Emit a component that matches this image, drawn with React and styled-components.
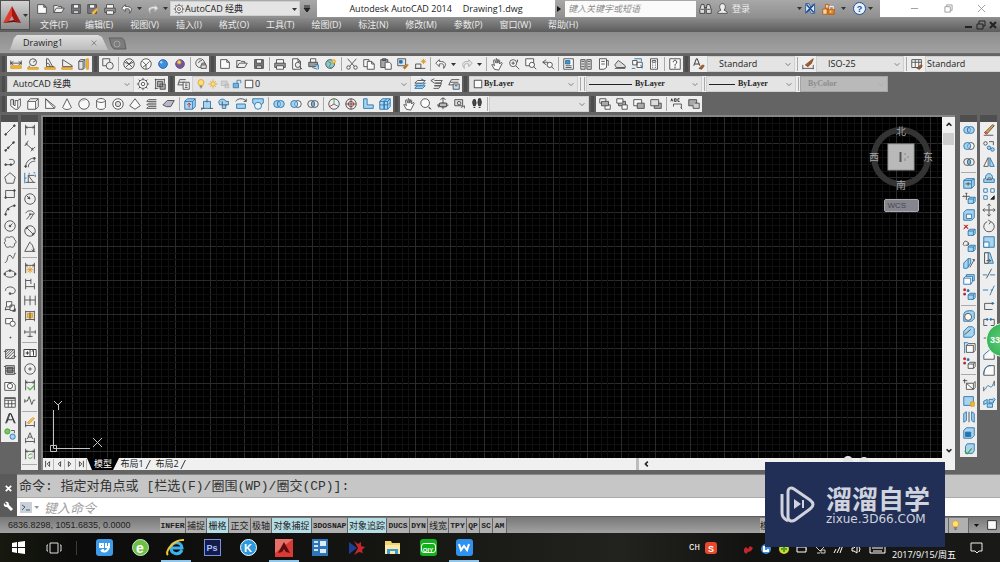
import styled, { createGlobalStyle, css } from "styled-components";

const K = "#4a4a4a";
const B = "#2573ad";
const L = "#a8d4f0";
const O = "#dc9a24";
const R = "#c4262e";
const G = "#3fa535";
const W = "#fafafa";

const circle = (x, y, r) =>
  `M${x - r} ${y}a${r} ${r} 0 1 0 ${2 * r} 0a${r} ${r} 0 1 0 ${-2 * r} 0z`;

const dimLine = "M3 2v12M13 2v12M3 5h10M5 4l-2 1 2 1M11 4l2 1-2 1";
const cube = "M7 8h6v5H7zM7 8l2-2h6l-2 2M15 6v5l-2 2";
const hand = "M5 14l-3-5 1-1 2 2-1-6 1-1 2 4V2h1l1 5 1-4 1 1v4l2-2 1 1-3 6-1 2z";

// every icon is a list of [path, stroke, fill] on a 16 x 16 grid
const icons = {
  distance: [["M2 10h12v3H2z", O, "#f0b83c"], ["M2 4v5M14 4v5M2 7h12M5 5L2 7l3 2M11 5l3 2-3 2"]],
  radius: [[circle(8, 6, 4)], ["M8 6l3-2M4 10l-1 2"], ["M2 12h12v2H2z", O, "#f0b83c"]],
  angle: [["M4 2v9h9M4 2h2l5 9M4 7c3 0 4 2 4 4"], ["M2 12h12v2H2z", O, "#f0b83c"]],
  area: [["M3 3v8h11v-1L3 3z"], ["M2 12h12v2H2z", O, "#f0b83c"]],
  volume: [["M2 5l2-2h5v9l-2 2H2zM7 5l2-2M2 5h5v9", K, "#e3e3e3"], ["M11 2h2v12h-2z", O, "#f0b83c"]],
  region: [["M2 2h8v8H2z"], [circle(10, 10, 4), K, "#eee"]],
  wire: [[circle(8, 8, 6)], ["M4 4l4 4 4-4M8 8l-4 4M8 8l4 4M3 6l5 2 5-2"]],
  hidden: [[circle(8, 8, 6), K, W], ["M4 5l4 4 4-4M8 9v5M4 12l4-3"]],
  blueBall: [[circle(8, 8, 5), "#1b5fa8", "#3f8fdc"], [circle(6, 6, 1), "#a9d2f5", "#d5ebff"]],
  shadedBall: [[circle(8, 8, 5), "#5a4a8a", "#6a5aa5"], [circle(7, 6, 2), "#f0a030", "#f7c85a"], ["M4 10c3 3 6 2 8-1", "#b04a4a"]],
  lockView: [[circle(7, 7, 5)], ["M5 7a4 4 0 014-3"], ["M8 9h6v4H8zM9 9V7h4v2", K, "#ddd"]],
  newFile: [["M3 3h7l3 3v7H3zM10 3v3h3", K, W]],
  open: [["M2 12V4h4l1 1h4v2M2 12l3-5h9l-3 5z", K, "#eee"]],
  save: [["M3 3h10v10H3z", K, "#75797f"], ["M5 3h6v4H5z", K, W], ["M5 10h6v3H5z", K, "#ddd"]],
  saveAs: [["M2 3h10v10H2z", K, "#75797f"], ["M4 3h6v4H4z", K, W], ["M14 8l-5 6H7v-2l5-5z", O, "#f6c25a"]],
  print: [["M2 7h12v5H2z", K, "#9b9b9b"], ["M4 7V3h8v4zM4 10h8v4H4z", K, W]],
  preview: [["M3 2h6l3 3v9H3zM9 2v3h3", K, W], [circle(9, 9, 3), K, "#e4eef5"], ["M11 11l3 3"]],
  publish: [["M2 6h10v5H2z", K, "#9b9b9b"], ["M4 6V2h6v4z", K, W], ["M9 9h4v5M6 12l6 2", B, L]],
  globe: [[circle(7, 8, 5), K, "#8fc4e0"], ["M4 5l4 2-2 4 3 2M9 4l3 4", G], [circle(11, 5, 2), O, "#f5d060"]],
  cut: [["M3 2l8 9M13 2L5 11"], [circle(4, 12, 2)], [circle(12, 12, 2)]],
  copy: [["M2 3h6v8H2z", K, W], ["M6 5h5l3 3v6H6zM11 5v3h3", K, W]],
  paste: [["M2 3h8v9H2z", K, "#a8a8a8"], ["M4 2h4v2H4z", K, "#777"], ["M7 6h5l2 2v6H7z", K, W]],
  matchProps: [["M2 2h9v8H2z", K, "#d5e6f2"], ["M4 4h3v3H4z", B, B], ["M8 12l5-4 1 1-4 5z", O, "#a06030"]],
  blockEdit: [["M3 8h6v5H3zM2 13h12"], ["M12 2v6M9 5h6M10 3l4 4M14 3l-4 4", O]],
  undo: [["M6 3L2 7l4 4V8c4-1 6 0 5 5 4-5 2-8-5-8z", K, W]],
  redo: [["M10 3l4 4-4 4V8c-4-1-6 0-5 5-4-5-2-8 5-8z", "#aaa", "#e4e4e4"]],
  pan: [[hand, K, W]],
  zoomRt: [[circle(7, 7, 4), K, W], ["M10 10l4 4M7 5v4M5 7h4M12 3v3"]],
  zoomWin: [["M2 2h9v8H2z", K, W], [circle(9, 9, 3), K, W], ["M11 11l3 3"]],
  zoomPrev: [["M6 3L2 6l4 3M2 6h6"], [circle(10, 9, 3), K, W], ["M12 11l3 3"]],
  zoomTool: [[circle(7, 7, 5), K, W], ["M11 11l3 3M11 12l2 2"]],
  properties: [["M2 2h11v12H2z", K, W], ["M4 4h5v4H4z", B, "#4b8fc5"], ["M4 10h7M4 12h7"]],
  designCenter: [["M2 3h5v11H2zM9 3h5v11H9zM3 5h3M3 8h3M3 11h3M10 5h3M10 8h3M10 11h3", K, "#ddd"]],
  palettes: [["M4 2h8v10l-3 2H4zM6 5h4M6 8h4M12 4h2v6", K, W]],
  sheetSet: [["M2 9l4-5 3 2 5 4v2H4zM2 13h12", K, "#ddd"]],
  markup: [["M3 4h5v5H3zM8 6h6v6H8z", K, W], ["M2 13h4M5 2h8v3M12 9l2 4", B]],
  calc: [["M4 2h8v12H4zM6 4h4v2H6z", K, W], ["M6 8h1M9 8h1M6 10h1M9 10h1M6 12h1M9 12h1"]],
  help: [["M2 2h12v12H2z", K, W], ["M6 6c0-3 4-3 4 0 0 2-2 1-2 4M8 11v2", "#222"]],
  textStyle: [["M2 10L5 2h1l3 8M3 8h5", "#222"], ["M8 13l4-4 2 1-3 4z", "#8a4a28", "#a05a30"]],
  dimStyle: [["M2 13h12M2 9v5M14 9v5", K], ["M5 9l5-4 4-3-2 5-4 4z", "#8a4a28", "#a05a30"]],
  tableStyle: [["M2 3h11v9H2zM2 6h11M6 3v9M10 3v9", K, W], ["M8 13l4-4 2 1-3 4z", "#8a4a28", "#a05a30"]],
  gear: [["M8 1v2M8 13v2M1 8h2M13 8h2M3 3l2 2M11 11l2 2M13 3l-2 2M5 11l-2 2"], [circle(8, 8, 5), K, W], [circle(8, 8, 2)]],
  workspace: [["M2 3h11M2 13h4M3 2v12M13 2v5"], ["M5 5h6v6H5zM8 8h6v6H8z", K, "#a9a9a9"]],
  layerProps: [["M3 3h7M2 6h7M1 9h6M3 3L1 9"], ["M7 6h7v8H7zM9 8h3M9 10h3M9 12h3", K, W]],
  bulb: [[circle(8, 6, 4), O, "#fbe07a"], ["M6 11h4M7 13h2"]],
  sun: [[circle(8, 8, 3), O, "#fbe07a"], ["M8 2v2M8 12v2M2 8h2M12 8h2M4 4l1 1M11 11l1 1M12 4l-1 1M5 11l-1 1", O]],
  freeze: [["M3 4h8v6H3zM8 8h5v5H8z", "#b5b5b5", "#d2d2d2"]],
  unlock: [["M3 7h7v6H3z", B, "#6fb5e2"], ["M8 7V3h5v4", B]],
  swatch: [["M3 3h10v10H3z", "#222", W]],
  layers: [["M5 10h9l-3 3H2z", B, L], ["M5 7h9l-3 3H2z", B, L], ["M5 4h9l-3 3H2z", K, W], ["M9 2l4 2", B]],
  layerPrev: [["M5 4h9l-2 3H5M6 7h7l-1 3H5M5 10h7l-2 3H4"], ["M5 2L1 4l4 3"]],
  layerIso: [["M5 3h9M4 6h9M2 9h6M5 3L2 9"], ["M7 8h7v6H7zM9 10h3", K, "#c8dff0"]],
  polysolid: [["M2 3h3v6l2 1V4h3l3-2v8l-3 4H7l-5-4z", K, W], ["M5 3v6M10 4v9"]],
  box: [["M2 5l3-3h9v9l-3 3H2zM2 5h9v9M11 5l3-3", K, W]],
  wedge: [["M3 2v11h10zM3 2l11 9-1 2", K, W]],
  cone: [["M8 2L3 12c2 3 8 3 10 0z", K, W]],
  sphere: [[circle(8, 8, 6), K, W], ["M3 6c2-2 4-2 6-2", "#bbb"]],
  cylinder: [["M3 4v8c2 3 8 3 10 0V4c-2-3-8-3-10 0zM3 4c2 3 8 3 10 0", K, W]],
  torus: [[circle(8, 8, 6), K, W], [circle(8, 8, 3), K, "#ddd"]],
  pyramid: [["M8 2L2 10l6 4 6-4z", K, W]],
  helix: [["M4 3h9M2 5h11M4 7h9M2 9h11M4 11h9M2 13h11M4 3l-2 2M4 7L2 9M4 11l-2 2"]],
  planar: [["M1 9l5-5h8l-4 7H5z", K, "#b9b5cc"]],
  extrude: [["M2 5l3-3h9v9l-3 3H2zM2 5h9v9M11 5l3-3", B, L], ["M7 12V7M5 9l2-2 2 2", R]],
  presspull: [["M4 5h8v8H4z", B, L], ["M8 2v4M2 13h3M11 13h4M2 12v3"]],
  sweep: [["M2 6c0-4 7-5 8-1h3v4h-3v4H6V9H3z", B, L], ["M6 5v4h5"]],
  revolve: [["M3 8h10v5H3z", B, L], ["M2 5c2-4 10-4 12 0M14 2v3h-3"]],
  loft: [["M2 2h12v5l-4 3H6L2 7z", B, L], [circle(8, 10, 4), B, "#e5f3fb"]],
  union: [[circle(6, 8, 4), B, L], [circle(10, 8, 4), B, L], ["M8 5a4 4 0 010 6 4 4 0 010-6z", B, W]],
  subtract: [[circle(10, 8, 4), K, W], [circle(6, 8, 4), B, L], ["M8 5a4 4 0 000 6", B, W]],
  intersect: [[circle(6, 8, 4)], [circle(10, 8, 4)], ["M8 5a4 4 0 010 6 4 4 0 010-6z", B, L]],
  gizmo: [[circle(8, 8, 6)], ["M8 8V2", G], ["M8 8l-5 3", R], ["M8 8l5 3", B]],
  orbitGlobe: [[circle(8, 8, 6), K, "#e8e8e8"], [circle(8, 8, 3), R], ["M8 2v12M2 8h12"]],
  ucs: [["M3 2v11h11V9H7V2z", B, L]],
  views: [["M2 5l3-3h9v9l-3 3H2zM2 5h9v9M11 5l3-3M2 9h9l3-3M7 5v9l0-9 3-3", B, L]],
  orbit: [["M8 1v13M5 3l3-2 3 2M2 9c2-3 10-3 12 0M2 9l1 3M14 9c-2 3-8 4-12 0"], ["M4 7h8v4H4z", K, "#bbb"]],
  swivel: [["M2 3h9v7H2z", K, "#ddd"], [circle(7, 7, 2)], ["M9 12l4-2v3"]],
  walk: [["M4 3h2l1 4-1 3H4L3 6zM4 12h2M10 2h2l1 4-1 4h-2L9 6zM10 12h2", "#222", K]],
  front: [["M2 2h7v5H2zM8 9h6v5H8z", K, W], ["M4 5h8v5H4z", K, "#a9a9a9"]],
  back: [["M4 5h8v5H4z", K, "#a9a9a9"], ["M2 2h7v5H2zM8 9h6v5H8z", K, W]],
  above: [["M2 3h9v7H2z", K, W], ["M6 7h8v6H6z", K, "#a9a9a9"]],
  under: [["M6 7h8v6H6z", K, "#a9a9a9"], ["M2 3h9v7H2z", K, "#ddd"]],
  textFront: [["M1 5l1-3 1 3M5 2v3h2V2zM11 2H9v3h2", "#222"], ["M4 8h9v5M4 8v3M12 12l2 2", K]],
  hatchBack: [["M2 3h9v7H2z", K, "#a9a9a9"], ["M9 7h5v6H7v-3", K, "#ccc"]],
  line: [["M3 13L13 3"], [circle(3, 13, 1), K, K], [circle(13, 3, 1), K, K]],
  xline: [["M3 13L13 3"], [circle(6, 10, 1), K, K], [circle(12, 4, 1), K, K], [circle(3, 13, 1), K, K]],
  pline: [["M3 11h7c4 0 4-6 0-6H7"], [circle(3, 11, 1), K, K], [circle(9, 11, 1), K, K]],
  polygon: [["M8 2l6 5-2 7H4L2 7z"]],
  rect: [["M3 4h10v8H3z"], [circle(3, 12, 1), K, K], [circle(13, 4, 1), K, K]],
  arc: [["M3 13c0-5 4-9 10-10"], [circle(3, 13, 1), K, K], [circle(6, 7, 1), K, K], [circle(13, 3, 1), K, K]],
  circle: [[circle(8, 8, 6)], [circle(8, 8, 1), K, K], ["M8 8l3-3"]],
  cloud: [["M3 7C1 4 4 1 7 3c2-2 6-1 6 2 3 2 2 5 0 5 1 4-3 5-5 3-2 2-6 1-5-2-2-1-2-3 0-4z"]],
  spline: [["M2 13C6 14 4 4 8 5s2 9 6-3"]],
  ellipse: [["M2 8c0-5 12-5 12 0S2 13 2 8z"], [circle(2, 8, 1), K, K], [circle(8, 4, 1), K, K], [circle(14, 8, 1), K, K]],
  ellArc: [["M3 9c-1-6 11-6 11 0 0 3-4 4-6 3"], [circle(8, 12, 1), K, K]],
  insert: [["M4 3h6v6H4zM8 7h5v6H8zM2 12h6M3 9v4", K, W], ["M11 14h3v-3z", K, K]],
  makeBlock: [["M3 4h8v6H3z", K, W], [circle(11, 10, 3), K, W]],
  point: [["M8 7h1v1H8z", K, K]],
  hatch: [["M3 3h10v10H3zM3 6l3-3M3 9l6-6M3 12l9-9M5 13l8-8M9 13l4-4M1 5h2M13 11h2"]],
  gradient: [["M3 3h10v10H3z", K, "#c5c5c5"], ["M3 6h10M3 9h10M1 4h2M13 12h2M5 5h6v6H5z", K, "#8f8f8f"]],
  regionDraw: [["M2 4h9l3 3v6H2z", K, W], [circle(8, 8, 3)]],
  table: [["M2 3h12v11H2zM2 6h12M2 10h12M6 6v8M10 6v8", K, W], ["M2 4h12", K]],
  mtext: [["M3 14L7 3h2l4 11M5 10h6M4 14L8 3M14 14L9 3", "#222"]],
  addSel: [[circle(5, 5, 3), G, "#7cc55f"], [circle(11, 11, 3), B, L], ["M9 4h4v3"]],
  dimLinear: [[dimLine]],
  dimAligned: [["M3 5l9 8M2 8l4-6M9 14l5-5M5 5l-1 2M10 13l1-3"]],
  dimArc: [["M3 14c0-6 4-10 11-11M6 14c0-4 3-7 8-7"], [circle(3, 13, 1), K, K], [circle(13, 4, 1), K, K]],
  dimOrd: [["M6 13V5h7M6 5l6 8M3 13h11"], ["M2 2v12M7 2v2M2 8h2M12 2h2M14 4v3", B]],
  dimRad: [[circle(8, 8, 6)], ["M8 8L4 4M8 8l-3-1M8 8L7 5"]],
  dimJog: [["M3 6c2-4 9-4 10 1M4 13l5-6-2 0 5 0-4 6"]],
  dimDia: [[circle(8, 8, 6)], ["M4 4l8 8M4 6V4h2M12 10v2h-2"]],
  dimAng: [["M2 13L8 2M2 13h12M8 3c3 2 4 5 4 9M10 11l2 2 1-3"]],
  quickDim: [[dimLine], ["M8 6v8M4 10h8M5 7l6 6M11 7l-6 6", O]],
  baseline: [["M3 2v12M9 2v6M13 7v7M3 4h6M3 11h10"]],
  cont: [["M2 3v11M8 3v11M14 3v11M2 8h12"]],
  dimSpace: [["M3 2v12M13 2v12M3 3h10M3 12h10"], ["M5 5h6v5H5z", O, "#f0b83c"], ["M8 4v8"]],
  dimBreak: [["M2 8h5M9 8h5M8 2v12M5 13h6M2 6v4M14 6v4"]],
  tolerance: [["M1 4h14v8H1zM8 4v8", "#222", W], ["M3 8h4M5 6v4M10 6l2-1v6", "#222"]],
  centerMark: [[circle(8, 8, 6)], ["M8 6v4M6 8h4"]],
  inspect: [[dimLine], ["M5 10l3 3 5-5M5 11l3 3 5-5", G]],
  jogLine: [["M2 8h3l2-5 3 9 2-5h2M2 6v4"]],
  dimEdit: [["M3 7v7M13 7v7M3 12h10"], ["M5 9l6-6 2 1-6 6z", O, "#f6c25a"]],
  dimTedit: [["M3 8v6M13 8v6M3 12h10M5 9l3-7 3 7M6 7h4"]],
  dimUpdate: [[dimLine], ["M6 10a3 3 0 015-1M11 11a3 3 0 01-5 1", G]],
  face: [["M2 5l3-2h9v8l-3 3H2zM2 5h9v9M11 5l3-2", B, L], ["M4 9h6M7 7v4"]],
  moveFace: [["M5 1v8M1 5h8M4 2l1-1 1 1M2 4L1 5l1 1"], [cube, B, L]],
  offsetFace: [["M2 5l3-3h9v9l-3 3H2z", B, L], ["M5 7h6v5H5z", B, W]],
  deleteFace: [["M2 1l5 5M7 1L2 6M3 1l4 4M6 1L2 5", R], [cube, B, L]],
  rotFace: [["M3 7a3 3 0 114-1M7 3v3H4"], [cube, B, L]],
  taperFace: [["M2 13V8l5-5h3v5l-4 6H2zM7 3v10", B, L], ["M9 13l5-9M12 4h2v2"]],
  copyFace: [["M5 3h9v7H5z", B, L], ["M2 7l2-2h8v6l-2 3H2zM2 7h8v7", B, W]],
  colorFace: [["M2 1h2v2H2z", R, R], ["M6 2h2v2H6z", B, B], ["M2 6h2v2H2z", R, K], [cube, B, L]],
  fillet3d: [["M2 7c0-3 2-5 6-5h4l2 2v7l-3 3H2z", B, L], [circle(7, 9, 4), K, W]],
  chamfer3d: [["M2 7l5-5h5l2 2v7l-3 3H2z", B, L], ["M3 11l7-6"]],
  copyEdge: [["M5 5h8v8H5zM5 5l2-2h8v8l-2 2", K, W], ["M3 2v12M2 2h5", B]],
  colorEdge: [["M2 1h2v2H2z", R, R], ["M6 2h2v2H6z", B, B], ["M2 6h2v2H2z", R, K], [cube, K, W]],
  imprint: [["M5 6h8v7H5zM5 6l8 7M13 6l2-2v7l-2 2", K, W], ["M3 1v5M1 3h5"]],
  clean: [["M2 3h11v8l-3 2H2z", B, L], ["M10 9h4v5h-4z", O, "#f0b83c"]],
  separate: [["M2 4l3-2v10l-3 2zM14 4l-3-2v10l3 2z", B, L], ["M8 2v12"]],
  shell: [["M2 5l3-3h9v9l-3 3H2z", B, L], ["M4 7h6v5H4z", B, B]],
  check: [["M4 5l2-3h8v8l-2 3H4z", B, L], ["M3 10l3 3 5-6M3 11l3 3 5-6", G]],
  erase: [["M3 11L12 2l2 1-8 9z", K, "#e8a33c"], ["M2 14h11"], ["M3 11l2 2 1-1-2-2z", R, "#e58a8a"]],
  copyObj: [[circle(4, 5, 2)], [circle(8, 10, 2), B, L], [circle(12, 12, 2), B, L], ["M8 3h5v4"]],
  mirror: [["M7 3v10H2z", K, W], ["M9 3v10h5z", B, L]],
  offset: [["M2 13h12V9h-2c1-8-9-8-8 0H2z", B, L], ["M5 10h6c0-3-5-3-5 0"]],
  array: [["M2 2h4v4H2zM10 2h4v4h-4zM2 10h4v4H2z", B, W], ["M10 14h4v-4z", "#222", "#222"]],
  move: [["M8 1v14M1 8h14M6 3l2-2 2 2M6 13l2 2 2-2M3 6L1 8l2 2M13 6l2 2-2 2"]],
  rotate: [["M10 3a6 6 0 11-4 0M7 1l3 2-2 3"]],
  scale: [["M2 2h12v12H2z", B, L], ["M2 8h6v6H2z", B, W]],
  stretch: [["M3 2h6l4 12H3z", B, L], ["M3 2h4v12H3z", K, W], ["M5 11h5M8 9l2 2-2 2"]],
  trim: [["M1 9h5M9 9h6", B], ["M5 13l6-11"]],
  extend: [["M1 8h6", B], ["M10 8h2"], ["M9 14l5-11", B]],
  breakAt: [["M14 5H3v7h9"], [circle(12, 5, 1), B, B]],
  break: [["M2 12V5h4M10 5h4v7h-4M2 12h4"], [circle(6, 5, 1), B, B], [circle(10, 5, 1), B, B]],
  join: [["M2 8h5M9 8h5M8 5v6"]],
  chamfer: [["M2 14h12V8L9 3", K, W], ["M2 14V9l7-6", B]],
  fillet: [["M2 14h12V3H9C5 3 2 7 2 14z", K, W], ["M2 13c0-6 3-10 8-10", B]],
  blend: [["M2 12c3 1 3-6 6-4s3 2 6-5", B], ["M2 14V9M14 2v6"]],
  explode: [["M2 7l4-2v4l-4 2zM8 5h5v4H8zM6 10h6v4H6z", B, L], ["M13 3l2 2-2 3", B, L]],
};

const GlobalStyle = createGlobalStyle`
  * {
    box-sizing: border-box;
  }
  body {
    margin: 0;
    background: #646464;
    color: #222;
    font-family: "Open Sans", "Noto Sans CJK SC", sans-serif;
    font-size: 9px;
    line-height: 12px;
  }
  button, input, select {
    margin: 0;
    padding: 0;
    border: 0;
    border-radius: 0;
    background: none;
    color: inherit;
    font: inherit;
  }
  a {
    color: inherit;
    text-decoration: none;
  }
`;

const Page = styled.div`
  position: relative;
  display: flex;
  flex-direction: column;
  min-height: 100vh;
  overflow: hidden;
`;

const Svg = styled.svg`
  display: block;
  flex: none;
  overflow: visible;
`;

const Header = styled.header`
  display: grid;
  grid-template-columns: 30px 1fr;
  grid-template-rows: 17px 15px;
  background: linear-gradient(#989898 17px, #8a8a8a 18px, #5c5c5c);
`;

const AppButton = styled.button`
  grid-row: span 2;
  display: flex;
  align-items: center;
  margin-bottom: 2px;
  border: 1px solid #4f4f4f;
  background: linear-gradient(#d2d2d2, #8c8c8c);
`;

const TitleBar = styled.div`
  display: flex;
  background: #fff;
`;

const QuickAccess = styled.div`
  display: flex;
  align-items: center;
  width: 287px;
  padding-left: 3px;
  background: linear-gradient(#a8a8a8, #909090);
`;

const Title = styled.h1`
  flex: 1;
  display: flex;
  justify-content: center;
  gap: 11px;
  margin: 0;
  font-size: 9px;
  font-weight: 400;
  line-height: 17px;
  white-space: nowrap;
`;

const InfoCenter = styled.div`
  display: flex;
  align-items: center;
  width: 325px;
  background: linear-gradient(#a8a8a8, #909090);
`;

const SearchInput = styled.input`
  width: 131px;
  height: 16px;
  margin-left: 2px;
  margin-right: 1px;
  padding-left: 3px;
  background: #fafafa;

  &::placeholder {
    color: #8c8c8c;
    font-style: italic;
    opacity: 1;
  }
`;

const SignIn = styled.a`
  width: 65px;
  margin-left: 1px;
  color: #eee;
`;

const WindowButtons = styled.div`
  display: flex;
  align-items: center;
  justify-content: space-between;
  width: 120px;
  padding: 0 14px 0 30px;
  color: #999;
`;

const MenuBar = styled.nav`
  display: flex;
  align-items: center;
  gap: 17px;
  padding-left: 10px;
  color: #ececec;
  white-space: nowrap;
`;

const DocButtons = styled.div`
  display: flex;
  gap: 2px;
  margin-left: auto;
  padding-right: 2px;
  color: #222;
`;

const FileTabs = styled.div`
  display: flex;
  align-items: flex-end;
  height: 22px;
  padding: 0 10px 3px;
  background: linear-gradient(#8d8d8d, #a2a2a2);
  border-bottom: 1px solid #6b6b6b;
`;

const FileTab = styled.div`
  display: flex;
  align-items: center;
  justify-content: space-between;
  width: 98px;
  height: 15px;
  padding: 0 10px 0 13px;
  background: linear-gradient(#dedede, #bcbcbc);
  clip-path: polygon(7px 0, 88px 0, 92px 2px, 100% 100%, 0 100%, 4px 3px);
  color: #222;
`;

const ToolbarArea = styled.div`
  display: flex;
  flex-direction: column;
  gap: 4px;
  padding: 2px 0 3px;
`;

const ToolbarRow = styled.div`
  display: flex;
  height: 16px;
  overflow: hidden;
`;

const Grip = styled.div`
  flex: none;
  width: 7px;
  background: #4c4c4c;
  border-left: 2px solid #5c5c5c;
  border-right: 2px solid #5c5c5c;
`;

const Bar = styled.div`
  flex: ${(props) => (props.$grow ? "1" : "none")};
  display: flex;
  align-items: center;
  background: #eee;
`;

const SideBar = styled.aside`
  display: flex;
  align-items: flex-start;
  gap: 3px;
`;

const ToolColumn = styled.div`
  width: 17px;
  border-top: 7px solid #4f4f4f;
  background: #eee;
  padding-bottom: ${(props) => (props.$tall ? "3px" : "0")};
`;

const ToolButton = styled.button`
  flex: none;
  display: grid;
  place-items: center;
  width: 17px;
  height: 16px;
`;

const ArrowButton = styled(ToolButton)`
  width: ${(props) => props.$width || 9}px;
`;

const Separator = styled.span`
  flex: none;
  display: block;
  ${(props) =>
    props.$flat
      ? css`
          height: 5px;
          background: linear-gradient(#aaa, #aaa) center / 15px 1px no-repeat;
        `
      : css`
          width: 4px;
          height: 14px;
          background: linear-gradient(#aaa, #aaa) center / 1px 14px no-repeat;
        `}
`;

const TaskSeparator = styled(Separator)`
  align-self: center;
  margin: 0 8px 0 2px;
  opacity: 0.3;
`;

const Field = styled.label`
  flex: none;
  display: grid;
  align-items: center;
  width: ${(props) => props.$width}px;
  height: ${(props) => (props.$tall ? "15px" : "16px")};
  background: ${(props) => (props.$disabled ? "#b9b9b9" : "#e4e4e4")};
  border: 1px solid ${(props) => (props.$disabled ? "#a5a5a5" : "#d0d0d0")};

  & > * {
    grid-area: 1 / 1;
  }
`;

const Select = styled.select`
  appearance: none;
  width: 100%;
  height: 14px;
  padding-left: ${(props) => props.$indent || 4}px;
  color: ${(props) => (props.disabled ? "#8c8c8c" : "#222")};
  opacity: 1;
  ${(props) =>
    props.$serif &&
    css`
      font-family: "Liberation Serif", serif;
      font-size: 8px;
      font-weight: 700;
    `}
`;

const Chevron = styled.span`
  justify-self: end;
  padding-right: 2px;
  pointer-events: none;
`;

const Leading = styled.span`
  display: flex;
  align-items: center;
  padding-left: 2px;
  pointer-events: none;
`;

const LineSample = styled.span`
  width: ${(props) => props.$width}px;
  height: 1px;
  background: #222;
`;

const Workspace = styled.main`
  flex: 1;
  display: flex;
  padding: 0 3px 0 1px;
`;

const Viewport = styled.section`
  flex: 1;
  display: grid;
  grid-template-columns: 1fr 13px;
  grid-template-rows: 1fr 12px;
  margin: 0 5px 4px 3px;
  border-top: 2px solid #858585;
  border-left: 2px solid #858585;
`;

const Canvas = styled.div`
  position: relative;
  overflow: hidden;
  background: #000;
`;

const GridLines = styled.svg`
  position: absolute;
  inset: 0;
  width: 100%;
  height: 100%;
`;

const UcsIcon = styled.svg`
  position: absolute;
  left: 5px;
  bottom: 2px;
`;

const NavCube = styled.div`
  position: absolute;
  top: 8px;
  right: 8px;
  display: flex;
  flex-direction: column;
  align-items: center;
`;

const WcsButton = styled.button`
  width: 35px;
  height: 13px;
  margin-top: 8px;
  padding-left: 3px;
  border: 1px solid #a9a9b0;
  border-radius: 2px;
  background: #85858d;
  color: #45454d;
  font: 8px/10px "Liberation Sans", sans-serif;
  text-align: left;
`;

const VScroll = styled.div`
  display: flex;
  flex-direction: column;
  align-items: center;
  justify-content: space-between;
  background: #f0f0f0;
`;

const Thumb = styled.div`
  width: 11px;
  height: 12px;
  background: #cdcdcd;
`;

const LayoutBar = styled.div`
  grid-column: span 2;
  display: flex;
  align-items: center;
  background: #f0f0f0;
`;

const NavButton = styled.button`
  display: grid;
  place-items: center;
  width: 11px;
  height: 11px;
  border-right: 1px solid #b5b5b5;
`;

const LayoutTab = styled.button`
  height: 12px;
  line-height: 12px;
  width: ${(props) => (props.$active ? "32px" : "26px")};
  white-space: nowrap;
  ${(props) =>
    props.$active &&
    css`
      background: #000;
      color: #fff;
      clip-path: polygon(0 0, 100% 0, 26px 100%, 5px 100%);
    `}
`;

const HScroll = styled.div`
  display: flex;
  align-items: center;
  flex: none;
  width: 35%;
  height: 12px;
  margin-left: auto;
  border-left: 3px solid #bcbcbc;
  padding-left: 4px;
`;

const CommandWindow = styled.section`
  display: grid;
  grid-template-columns: 17px 1fr;
  grid-template-rows: 24px 18px;
  background: #fff;
`;

const CommandSide = styled.div`
  grid-row: span 2;
  display: flex;
  flex-direction: column;
  align-items: center;
  justify-content: space-around;
  padding-top: 6px;
  background: #5a5a5a;
`;

const History = styled.p`
  margin: 0;
  padding-left: 2px;
  border-top: 1px solid #888;
  border-bottom: 1px solid #aaa;
  background: #c6c6c6;
  color: #333;
  font: 13px/23px "Liberation Mono", "Noto Sans CJK SC", monospace;
  white-space: pre;
`;

const Prompt = styled.label`
  display: flex;
  align-items: center;
  gap: 4px;
  padding-left: 3px;
`;

const CommandInput = styled.input`
  flex: 1;
  font: 13px/17px "Noto Sans CJK SC", sans-serif;

  &::placeholder {
    color: #a0a0a0;
    font-style: italic;
    opacity: 1;
  }
`;

const StatusBar = styled.footer`
  display: flex;
  align-items: center;
  height: 17px;
  border-top: 1px solid #5c5c5c;
  background: linear-gradient(#777, #a2a2a2);
`;

const Coordinates = styled.output`
  width: 160px;
  padding-left: 8px;
  font: 9px/12px "Liberation Sans", sans-serif;
`;

const Toggle = styled.button`
  width: ${(props) => props.$width}px;
  height: 15px;
  border-right: 1px solid #666;
  background: ${(props) => (props.$on ? "#b5dde6" : "#b0b0b0")};
  color: #222;
  font: 700 8px/13px "Liberation Mono", monospace;
  text-align: ${(props) => (props.$start ? "left" : "center")};
  white-space: nowrap;

  &:lang(zh) {
    font: 9px/13px "Noto Sans CJK SC", sans-serif;
  }
`;

const StatusRight = styled.div`
  display: flex;
  align-items: center;
  margin-left: auto;
`;

const Taskbar = styled.nav`
  display: flex;
  height: 29px;
  background: linear-gradient(90deg, #17190f, #0b0c0b 8%, #151612 40%, #22231f 62%, #121310 75%, #191a18);
  color: #fff;
`;

const TaskButton = styled.button`
  display: grid;
  place-items: center;
  width: 36px;
  box-shadow: ${(props) => (props.$open ? "inset 0 -2px 0 #8fc7ec" : "none")};
  border-left: 3px solid transparent;
  border-right: 3px solid transparent;
`;

const Tile = styled.span`
  display: grid;
  place-items: center;
  width: ${(props) => props.$w || 17}px;
  height: ${(props) => props.$h || props.$w || 17}px;
  border: 1px solid ${(props) => props.$edge || "transparent"};
  border-radius: ${(props) => (props.$round ? "50%" : props.$square ? "0" : "3px")};
  background: ${(props) => props.$bg};
  color: ${(props) => props.$ink || "#fff"};
  font: 700 ${(props) => props.$size || 9}px/12px "Liberation Sans", sans-serif;
`;

const Tray = styled.div`
  display: flex;
  align-items: center;
  margin-left: auto;
  padding-right: 17px;
`;

const Language = styled.span`
  width: 16px;
  font: 9px/12px "Liberation Mono", monospace;
`;

const TrayIcons = styled.div`
  display: flex;
  gap: 7px;
  width: 175px;
  padding-left: 26px;
  padding-top: 4px;
`;

const Clock = styled.time`
  width: 78px;
  padding-top: 14px;
  white-space: nowrap;
  line-height: 12px;
`;

const Brand = styled.div`
  position: absolute;
  right: 55px;
  bottom: 15px;
  display: flex;
  align-items: center;
  gap: 11px;
  width: 180px;
  height: 85px;
  padding-left: 15px;
  background: #212f56;
  color: #d0d3dd;
`;

const BrandDots = styled.svg`
  position: absolute;
  left: 75px;
  top: -6px;
`;

const BrandName = styled.div`
  font: 700 26px/28px "Noto Sans CJK SC", sans-serif;
  white-space: nowrap;
`;

const BrandSite = styled.div`
  font: 12px/14px "DejaVu Sans", sans-serif;
  white-space: nowrap;
`;

const Ball = styled.div`
  position: absolute;
  right: -20px;
  top: 323px;
  width: 34px;
  height: 34px;
  padding-left: 3px;
  border: 1px solid #e5f5e5;
  border-radius: 50%;
  background: radial-gradient(#5cd07a, #2faa4d);
  color: #fff;
  font: 700 9px/32px "Liberation Sans", sans-serif;
`;

function Icon({ name, size = 14 }) {
  return (
    <Svg width={size} height={size} viewBox="0 0 16 16" aria-hidden="true">
      {icons[name].map(([d, stroke = K, fill = "none"], i) => (
        <path key={i} d={d} stroke={stroke} fill={fill} strokeLinejoin="round" />
      ))}
    </Svg>
  );
}

function Arrow({ color = "#333" }) {
  return (
    <Svg width="5" height="3" viewBox="0 0 10 6" aria-hidden="true">
      <path d="M0 0h10L5 6z" fill={color} />
    </Svg>
  );
}

const Stroke = ({ d, size = 9, color = "currentColor", width = 1 }) => (
  <Svg width={size} height={size} viewBox="0 0 10 10" aria-hidden="true">
    <path d={d} stroke={color} strokeWidth={width} fill="none" />
  </Svg>
);

// "|" draws a separator, "v" a small drop-down arrow
function Tools({ list, flat }) {
  return list.split(" ").map((name, i) => {
    if (name === "|") return <Separator key={i} $flat={flat} />;
    if (name === "v")
      return (
        <ArrowButton key={i} aria-label="more">
          <Arrow />
        </ArrowButton>
      );
    return (
      <ToolButton key={i} aria-label={name}>
        <Icon name={name} />
      </ToolButton>
    );
  });
}

function DropDown({ label, value, width, indent, serif, disabled, tall, children }) {
  return (
    <Field $width={width} $disabled={disabled} $tall={tall}>
      <Select aria-label={label} $indent={indent} $serif={serif} disabled={disabled}>
        <option>{value}</option>
      </Select>
      {children && <Leading>{children}</Leading>}
      <Chevron>
        {tall ? <Arrow /> : <Stroke d="M2 4l3 3 3-3" size={8} color={disabled ? "#aaa" : "#666"} />}
      </Chevron>
    </Field>
  );
}

const menus = ["文件(F)", "编辑(E)", "视图(V)", "插入(I)", "格式(O)", "工具(T)", "绘图(D)", "标注(N)", "修改(M)", "参数(P)", "窗口(W)", "帮助(H)"];

const toggles = [
  ["INFER", 26], ["捕捉", 21], ["栅格", 22, true], ["正交", 22], ["极轴", 21],
  ["对象捕捉", 40, true], ["3DOSNAP", 36], ["对象追踪", 39, true], ["DUCS", 23],
  ["DYN", 18], ["线宽", 21], ["TPY", 18], ["QP", 13], ["SC", 13], ["AM", 14],
];

const steps = Array.from({ length: 400 }, (_, i) => i);

function DrawingGrid() {
  return (
    <GridLines aria-hidden="true">
      {steps.map((i) => {
        const major = i % 5 === 0;
        const x = Math.round(-5 + i * 6.86);
        const y = Math.round(-8 + i * 6.84);
        const color = major ? "#2b2b2b" : "#101010";
        return (
          <g key={i} fill={color}>
            <rect x={x} y="0" width="1" height="100%" />
            <rect x="0" y={y} width="100%" height="1" />
          </g>
        );
      })}
    </GridLines>
  );
}

function DrawingCanvas() {
  return (
    <Canvas>
      <DrawingGrid />
      <UcsIcon width="60" height="60" viewBox="0 0 60 60" fill="none" stroke="#c4c4c4">
        <path d="M5.5 14v35M9 52.5h33M2.5 49.5h6v6h-6z" />
        <path d="M5.5 49v3.5h4" />
        <path d="M6 5l4 4 4-4M10.5 9v5M45 42l9 9M54 42l-9 9" />
      </UcsIcon>
      <NavCube>
        <Svg width="66" height="66" viewBox="0 0 66 66">
          <circle cx="33" cy="32" r="27" fill="none" stroke="#343434" strokeWidth="6" />
          <rect x="20" y="19" width="26" height="26" fill="#b9b9b9" stroke="#999" />
          <path d="M32.5 27v10" stroke="#555" strokeWidth="2" />
          <path d="M37 28v2M37 33v3M40 31v2" stroke="#888" />
          <g fill="#a5a5a5" fontSize="10" fontFamily="Noto Sans CJK SC, sans-serif" textAnchor="middle">
            <text x="33" y="10">北</text>
            <text x="6" y="36">西</text>
            <text x="60" y="36">东</text>
            <text x="33" y="64">南</text>
          </g>
        </Svg>
        <WcsButton>WCS</WcsButton>
      </NavCube>
    </Canvas>
  );
}

function Top() {
  return (
    <Header>
      <AppButton aria-label="application menu">
        <Svg width="22" height="22" viewBox="0 0 22 22">
          <path d="M11 2L2 19l6-2 3-5z" fill="#e03a2c" />
          <path d="M11 2l9 17-7-3-2-4z" fill="#a5140f" />
          <path d="M2 19l6-2 5-1 7 3-7-1z" fill="#7a0c0a" />
        </Svg>
        <Arrow />
      </AppButton>
      <TitleBar>
        <QuickAccess>
          <Tools list="newFile open save saveAs print undo v redo v" />
          <DropDown label="workspace" value="AutoCAD 经典" width={130} indent={14} tall>
            <Icon name="gear" size={12} />
          </DropDown>
          <ArrowButton aria-label="customize" $width={13}>
            <Svg width="8" height="8" viewBox="0 0 8 8">
              <path d="M1 1h6M1 3h6L4 7z" fill="#222" stroke="#222" />
            </Svg>
          </ArrowButton>
        </QuickAccess>
        <Title>
          <span>Autodesk AutoCAD 2014</span>
          <span>Drawing1.dwg</span>
        </Title>
        <InfoCenter>
          <ArrowButton aria-label="collapse" $width={8}>
            <Svg width="4" height="6" viewBox="0 0 4 6">
              <path d="M0 0v6l4-3z" fill="#111" />
            </Svg>
          </ArrowButton>
          <SearchInput aria-label="search" placeholder="键入关键字或短语" />
          <ToolButton aria-label="find">
            <Svg width="13" height="13" viewBox="0 0 16 16" fill="#ddd" stroke="#333">
              <path d="M1 14V9l2-6h3l1 5v6zM9 14V8l1-5h3l2 6v5zM7 7h2M2 9h4M10 9h4" />
            </Svg>
          </ToolButton>
          <ToolButton aria-label="account">
            <Svg width="13" height="13" viewBox="0 0 16 16" fill="#eee" stroke="#444">
              <path d="M2 14c0-3 3-3 4-4-3-4-1-8 2-8s5 4 2 8c1 1 4 1 4 4z" />
            </Svg>
          </ToolButton>
          <SignIn href="#login">登录</SignIn>
          <Arrow />
          <ToolButton aria-label="exchange">
            <Svg width="13" height="13" viewBox="0 0 16 16">
              <path d="M2 2h4l3 5 4-5v12h-4L6 9l-4 5z" fill="#dce8f5" stroke="#1f4f94" />
              <path d="M3 3l9 10M12 3L3 13" stroke="#1f4f94" strokeWidth="2" />
            </Svg>
          </ToolButton>
          <ToolButton aria-label="connect">
            <Svg width="14" height="14" viewBox="0 0 16 16">
              <path d="M2 8h5v6H2zM5 3h4v4H5z" fill="#f7d4a5" stroke="#b35a10" />
              <path d="M8 8h7v6H8z" fill="#e58620" stroke="#b35a10" />
              <path d="M10 8V5h4v3M11 10v2" fill="none" stroke="#fff" />
            </Svg>
          </ToolButton>
          <ArrowButton aria-label="more" $width={15}>
            <Arrow />
          </ArrowButton>
          <ToolButton aria-label="help" as="a" href="#help">
            <Tile $round $bg="#e8f1fb" $ink="#1f4f94" $edge="#1f4f94" $w={13}>
              ?
            </Tile>
          </ToolButton>
          <Arrow />
        </InfoCenter>
        <WindowButtons>
          <button aria-label="minimize"><Stroke d="M1 5h8" /></button>
          <button aria-label="restore"><Stroke d="M1 3h6v6H1zM3 3V1h6v6H7" /></button>
          <button aria-label="close"><Stroke d="M1 1l8 8M9 1L1 9" /></button>
        </WindowButtons>
      </TitleBar>
      <MenuBar>
        {menus.map((menu) => (
          <a key={menu} href="#menu">
            {menu}
          </a>
        ))}
        <DocButtons>
          <button aria-label="minimize drawing"><Stroke d="M1 7h7" size={10} width={2} /></button>
          <button aria-label="restore drawing"><Stroke d="M1 4h6v5H1zM3 4V1h6v5H7" size={10} /></button>
          <button aria-label="close drawing"><Stroke d="M2 2l6 6M8 2L2 8" size={10} width={2} /></button>
        </DocButtons>
      </MenuBar>
    </Header>
  );
}

function Toolbars() {
  return (
    <ToolbarArea>
      <ToolbarRow>
        <Grip />
        <Bar><Tools list="distance radius angle area volume" /></Bar>
        <Grip />
        <Bar><Tools list="region | wire hidden blueBall shadedBall | lockView" /></Bar>
        <Grip />
        <Bar>
          <Tools list="newFile open save | print preview publish globe | cut copy paste matchProps blockEdit | undo v redo v | pan zoomRt zoomWin zoomPrev | properties designCenter palettes sheetSet markup calc | help" />
        </Bar>
        <Grip />
        <Bar $grow>
          <Tools list="textStyle" />
          <DropDown label="text style" value="Standard" width={88} indent={11} />
          <Tools list="| dimStyle" />
          <DropDown label="dimension style" value="ISO-25" width={88} indent={11} />
          <Tools list="| tableStyle" />
          <DropDown label="table style" value="Standard" width={88} indent={1} />
        </Bar>
      </ToolbarRow>
      <ToolbarRow>
        <Grip />
        <Bar>
          <DropDown label="workspace" value="AutoCAD 经典" width={127} indent={5} />
          <Tools list="gear workspace" />
        </Bar>
        <Grip />
        <Bar>
          <Tools list="layerProps" />
          <DropDown label="layer" value="0" width={219} indent={62}>
            <Icon name="bulb" size={12} />
            <Icon name="sun" size={12} />
            <Icon name="freeze" size={12} />
            <Icon name="unlock" size={12} />
            <Icon name="swatch" size={12} />
          </DropDown>
          <Tools list="layers layerPrev layerIso" />
        </Bar>
        <Grip />
        <Bar>
          <DropDown label="color" value="ByLayer" width={109} indent={14} serif>
            <Icon name="swatch" size={12} />
          </DropDown>
          <Tools list="| |" />
          <DropDown label="linetype" value="ByLayer" width={116} indent={48} serif>
            <LineSample $width={43} />
          </DropDown>
          <Tools list="|" />
          <DropDown label="lineweight" value="ByLayer" width={90} indent={31} serif>
            <LineSample $width={26} />
          </DropDown>
          <Tools list="|" />
          <DropDown label="plot style" value="ByColor" width={88} indent={7} serif disabled />
        </Bar>
      </ToolbarRow>
      <ToolbarRow>
        <Grip />
        <Bar>
          <Tools list="polysolid box wedge cone sphere cylinder torus pyramid helix planar | extrude presspull sweep revolve loft | union subtract intersect | gizmo orbitGlobe ucs views" />
        </Bar>
        <Grip />
        <Bar>
          <Tools list="pan zoomTool orbit swivel walk |" />
          <DropDown label="view" value="" width={100} />
        </Bar>
        <Grip />
        <Bar><Tools list="front back above under | textFront hatchBack" /></Bar>
      </ToolbarRow>
    </ToolbarArea>
  );
}

function DrawingArea() {
  return (
    <Workspace>
      <SideBar>
        <ToolColumn>
          <Tools flat list="line xline pline polygon rect arc circle cloud spline ellipse ellArc insert makeBlock point hatch gradient regionDraw table mtext addSel" />
        </ToolColumn>
        <ToolColumn $tall>
          <Tools flat list="dimLinear dimAligned dimArc dimOrd | dimRad dimJog dimDia dimAng | quickDim baseline cont dimSpace dimBreak | tolerance centerMark inspect jogLine | dimEdit dimTedit dimUpdate |" />
        </ToolColumn>
      </SideBar>
      <Viewport>
        <DrawingCanvas />
        <VScroll>
          <div>
            <ArrowButton aria-label="scroll up" $width={11}><Stroke d="M2 6l3-3 3 3" size={8} width={2} /></ArrowButton>
            <Thumb />
          </div>
          <ArrowButton aria-label="scroll down" $width={11}><Stroke d="M2 4l3 3 3-3" size={8} width={2} /></ArrowButton>
        </VScroll>
        <LayoutBar>
          <NavButton aria-label="first"><Stroke d="M2 1v8M7 2v6L4 5z" size={8} /></NavButton>
          <NavButton aria-label="previous"><Stroke d="M7 2v6L4 5z" size={8} /></NavButton>
          <NavButton aria-label="next"><Stroke d="M3 2v6l3-3z" size={8} /></NavButton>
          <NavButton aria-label="last"><Stroke d="M3 2v6l3-3zM8 1v8" size={8} /></NavButton>
          <LayoutTab $active>模型</LayoutTab>
          <LayoutTab>布局1</LayoutTab>
          <Stroke d="M1 10L6 0" size={9} />
          <LayoutTab>布局2</LayoutTab>
          <Stroke d="M1 10L6 0" size={9} />
          <HScroll>
            <Stroke d="M6 2L3 5l3 3" size={8} width={2} />
          </HScroll>
        </LayoutBar>
      </Viewport>
      <SideBar>
        <ToolColumn>
          <Tools flat list="union subtract intersect | face moveFace offsetFace deleteFace rotFace taperFace copyFace colorFace | fillet3d chamfer3d copyEdge colorEdge | imprint clean separate shell check" />
        </ToolColumn>
        <ToolColumn>
          <Tools flat list="erase copyObj mirror offset array move rotate scale stretch trim extend breakAt break join chamfer fillet blend explode" />
        </ToolColumn>
      </SideBar>
    </Workspace>
  );
}

function Command() {
  return (
    <CommandWindow>
      <CommandSide>
        <button aria-label="close command line"><Stroke d="M2 2l6 6M8 2L2 8" color="#fff" width={2} /></button>
        <button aria-label="customize">
          <Svg width="11" height="11" viewBox="0 0 11 11">
            <path d="M1 2l2 2 1-1-2-2c3-1 4 1 4 3l4 4-2 2-4-4c-2 0-4-1-3-4z" fill="#fff" />
          </Svg>
        </button>
      </CommandSide>
      <History>命令: 指定对角点或 [栏选(F)/圈围(WP)/圈交(CP)]:</History>
      <Prompt>
        <Svg width="20" height="11" viewBox="0 0 20 11">
          <path d="M0 0h12v11H0z" fill="#c9d0d8" />
          <path d="M2 3l3 2-3 3M6 8h4" stroke="#4a5a70" fill="none" />
          <path d="M14 4h5l-2 3z" fill="#999" />
        </Svg>
        <CommandInput aria-label="command" placeholder="键入命令" />
      </Prompt>
    </CommandWindow>
  );
}

function Status() {
  return (
    <StatusBar>
      <Coordinates>6836.8298, 1051.6835, 0.0000</Coordinates>
      {toggles.map(([label, width, on]) => (
        <Toggle key={label} $width={width} $on={on} lang={/[A-Z]/.test(label) ? "en" : "zh"}>
          {label}
        </Toggle>
      ))}
      <StatusRight>
        <Toggle $width={189} $start lang="zh">模型</Toggle>
        <Toggle $width={20} aria-label="isolate objects"><Icon name="bulb" size={13} /></Toggle>
        <ArrowButton aria-label="status menu" $width={14}><Arrow color="#111" /></ArrowButton>
        <ToolButton aria-label="clean screen"><Icon name="swatch" /></ToolButton>
      </StatusRight>
    </StatusBar>
  );
}

function Tasks() {
  return (
    <Taskbar>
      <TaskButton aria-label="start">
        <Svg width="13" height="13" viewBox="0 0 13 13" fill="#fff">
          <path d="M0 2l5-1v5H0zM6 1l7-1v6H6zM0 7h5v5l-5-1zM6 7h7v6l-7-1z" />
        </Svg>
      </TaskButton>
      <TaskButton aria-label="task view">
        <Svg width="16" height="12" viewBox="0 0 16 12" fill="none" stroke="#ddd">
          <path d="M4 1h8v10H4zM2 3H1v6h1M14 3h1v6h-1" />
        </Svg>
      </TaskButton>
      <TaskSeparator />
      <TaskButton aria-label="assistant">
        <Tile $bg="#3f9be8">
          <Svg width="13" height="13" viewBox="0 0 13 13" fill="none" stroke="#fff" strokeWidth="2">
            <path d="M2 3h3v3H2zM8 2v4h3V2M3 9c2 2 6 3 8-3M5 8v3" />
          </Svg>
        </Tile>
      </TaskButton>
      <TaskButton aria-label="browser"><Tile $round $bg="#6cc04a" $size={14} $edge="#c9ecb8">e</Tile></TaskButton>
      <TaskButton aria-label="internet explorer" $open>
        <Svg width="20" height="19" viewBox="0 0 20 19" fill="none">
          <path d="M16 12c-3 6-11 4-11-2 0-7 11-7 11 0H6" stroke="#3cb2ee" strokeWidth="3" />
          <path d="M2 17c-4-3 6-16 16-15" stroke="#f4c430" strokeWidth="2" />
        </Svg>
      </TaskButton>
      <TaskButton aria-label="photoshop"><Tile $square $bg="#141c4a" $edge="#7a8fe0" $ink="#a9c0ff">Ps</Tile></TaskButton>
      <TaskButton aria-label="music"><Tile $round $bg="#2a9ae0" $edge="#fff" $size={11}>K</Tile></TaskButton>
      <TaskButton aria-label="autocad" $open>
        <Svg width="18" height="18" viewBox="0 0 18 18">
          <path d="M0 0h18v18H0z" fill="#d93a36" />
          <path d="M0 0h18L0 14z" fill="#e8706a" />
          <path d="M9 3L3 14l4-1 2-3 2 3 4 1z" fill="#5a0f0f" />
        </Svg>
      </TaskButton>
      <TaskButton aria-label="documents">
        <Svg width="16" height="17" viewBox="0 0 16 17">
          <path d="M0 0h16v17H0z" fill="#2f75b8" />
          <path d="M2 3h4M2 7h4M2 11h4" stroke="#cfe3f5" strokeWidth="2" />
          <path d="M8 2h6v5H8zM8 10h6v4H8z" fill="#dcebf7" />
        </Svg>
      </TaskButton>
      <TaskButton aria-label="player">
        <Svg width="17" height="16" viewBox="0 0 17 16">
          <path d="M6 1l4 3 3-2v4l4 1-3 3 1 3-4-1-5 3 4-7z" fill="#c4262e" />
          <path d="M1 2l8 6-8 6z" fill="#1f3f94" />
        </Svg>
      </TaskButton>
      <TaskButton aria-label="explorer">
        <Svg width="17" height="15" viewBox="0 0 17 15">
          <path d="M1 1h6l1 2h8v11H1z" fill="#f3d36b" />
          <path d="M1 5h15v9H1z" fill="#fbe9a5" />
          <path d="M3 14V9h11v5h-3v-3H6v3z" fill="#3f9bd8" />
        </Svg>
      </TaskButton>
      <TaskButton aria-label="iqiyi">
        <Tile $bg="#14b01c">
          <Tile $bg="#14b01c" $edge="#fff" $size={6} $w={15} $h={10}>QIY</Tile>
        </Tile>
      </TaskButton>
      <TaskButton aria-label="wps" $open>
        <Tile $bg="#2f93ee">
          <Svg width="12" height="9" viewBox="0 0 12 9" fill="none" stroke="#fff" strokeWidth="2">
            <path d="M1 1l2 6 3-4 3 4 2-6" />
          </Svg>
        </Tile>
      </TaskButton>
      <Tray>
        <Language>CH</Language>
        <Tile $bg="#e8482c" $w={12}>S</Tile>
        <TrayIcons>
          <Svg width="11" height="11" viewBox="0 0 11 11"><path d="M1 5l2-2 2 2 2-3 3 2-2 3-3 1-2 2-2-2z" fill="#c4262e" /></Svg>
          <Svg width="11" height="11" viewBox="0 0 11 11"><circle cx="5" cy="5" r="5" fill="#3f8fdc" /><path d="M3 2v5h4V5" stroke="#fff" fill="none" strokeWidth="2" /></Svg>
          <Svg width="11" height="11" viewBox="0 0 11 11"><circle cx="5" cy="5" r="5" fill="#d5d52a" /><path d="M5 2v6M2 5h6" stroke="#3fa535" strokeWidth="2" /></Svg>
          <Svg width="11" height="11" viewBox="0 0 11 11" fill="none" stroke="#fff"><path d="M0 3h9v5H0zM9 5h1" /></Svg>
          <Svg width="11" height="11" viewBox="0 0 11 11" fill="none" stroke="#ccc"><path d="M1 3l4 4 5-5M2 9h3M6 6h4v3H6z" /></Svg>
          <Svg width="11" height="11" viewBox="0 0 11 11" fill="none" stroke="#fff"><path d="M1 9l2-4M4 9l3-6M7 9l3-8" /></Svg>
          <Svg width="11" height="11" viewBox="0 0 11 11" fill="none" stroke="#fff"><path d="M1 4h2l3-3v8L3 7H1zM8 3l1 2-1 3" /></Svg>
          <Svg width="17" height="11" viewBox="0 0 17 11" fill="none" stroke="#fff"><path d="M1 1h15v8H1zM3 4h11M4 7h9" /></Svg>
        </TrayIcons>
        <Clock>2017/9/15/周五</Clock>
        <Svg width="13" height="12" viewBox="0 0 13 12" fill="none" stroke="#eee">
          <path d="M1 1h11v8H9l-2 2-2-2H1z" />
        </Svg>
      </Tray>
    </Taskbar>
  );
}

function App() {
  return (
    <>
      <GlobalStyle />
      <Page>
        <Top />
        <FileTabs>
          <FileTab>
            Drawing1
            <button aria-label="close tab"><Stroke d="M2 2l6 6M8 2L2 8" size={8} color="#777" /></button>
          </FileTab>
          <button aria-label="new tab">
            <Svg width="19" height="14" viewBox="0 0 19 14">
              <path d="M1 2h12c4 0 4 6 5 11H7C3 13 3 6 1 2z" fill="#7c7c7c" stroke="#5f5f5f" />
              <circle cx="9" cy="8" r="3" fill="none" stroke="#a5a5a5" />
            </Svg>
          </button>
        </FileTabs>
        <Toolbars />
        <DrawingArea />
        <Command />
        <Status />
        <Tasks />
        <Ball>33</Ball>
        <Brand>
          <BrandDots width="34" height="6" viewBox="0 0 34 6" fill="#e4e4ea">
            <circle cx="8" cy="5" r="5" />
            <circle cx="24" cy="6" r="5" />
          </BrandDots>
          <Svg width="35" height="37" viewBox="0 0 35 37" fill="none" stroke="#d0d3dd" strokeWidth="3">
            <path d="M8 6c0-4 3-5 6-3l16 11c4 3 4 6 0 9L15 34c-3 2-7 1-7-3z" />
            <path d="M2 8v19c0 4 2 6 6 8" />
            <path d="M14 13v10l7-5z" fill="#d0d3dd" stroke="none" />
            <path d="M23 14v8" strokeWidth="2" />
          </Svg>
          <div>
            <BrandName>溜溜自学</BrandName>
            <BrandSite>zixue.3D66.COM</BrandSite>
          </div>
        </Brand>
      </Page>
    </>
  );
}

export default App;
